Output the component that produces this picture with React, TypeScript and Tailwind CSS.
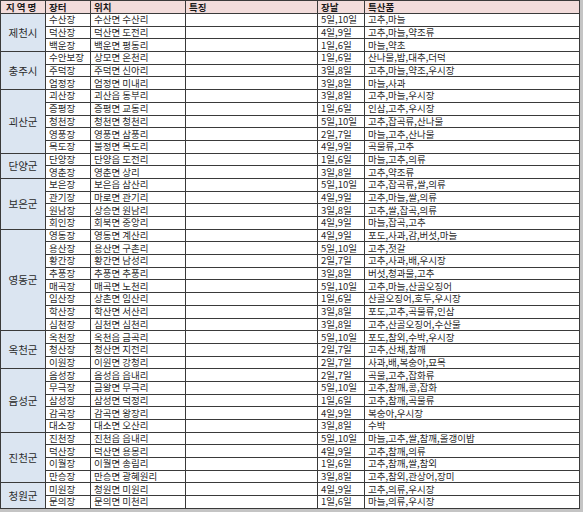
const groups: { region: string; rows: [string, string, string, string][] }[] = [
  {
    region: '제천시',
    rows: [
      ['수산장', '수산면 수산리', '5일,10일', '고추,마늘'],
      ['덕산장', '덕산면 도전리', '4일,9일', '고추,마늘,약조류'],
      ['백운장', '백운면 평동리', '1일,6일', '마늘,약초'],
    ],
  },
  {
    region: '충주시',
    rows: [
      ['수안보장', '상모면 온천리', '1일,6일', '산나물,밤,대추,더덕'],
      ['주덕장', '주덕면 신아리', '3일,8일', '고추,마늘,약조,우시장'],
      ['엄정장', '엄정면 미내리', '3일,8일', '마늘,사과'],
    ],
  },
  {
    region: '괴산군',
    rows: [
      ['괴산장', '괴산읍 동부리', '3일,8일', '고추,마늘,우시장'],
      ['증평장', '증평면 교동리', '1일,6일', '인삼,고추,우시장'],
      ['청천장', '청천면 청천리', '5일,10일', '고추,잡곡류,산나물'],
      ['영풍장', '영풍면 삼풍리', '2일,7일', '마늘,고추,산나물'],
      ['목도장', '불정면 목도리', '4일,9일', '곡물류,고추'],
    ],
  },
  {
    region: '단양군',
    rows: [
      ['단양장', '단양읍 도전리', '1일,6일', '마늘,고추,의류'],
      ['영춘장', '영춘면 상리', '3일,8일', '고추,약조류'],
    ],
  },
  {
    region: '보은군',
    rows: [
      ['보은장', '보은읍 삼산리', '5일,10일', '고추,잡곡류,쌀,의류'],
      ['관기장', '마로면 관기리', '4일,9일', '고추,마늘,쌀,의류'],
      ['원남장', '상승면 원남리', '3일,8일', '고추,쌀,잡곡,의류'],
      ['회인장', '회북면 중앙리', '4일,9일', '마늘,잡곡,고추'],
    ],
  },
  {
    region: '영동군',
    rows: [
      ['영동장', '영동면 계산리', '4일,9일', '포도,사과,감,버섯,마늘'],
      ['용산장', '용산면 구촌리', '5일,10일', '고추,젓갈'],
      ['황간장', '황간면 남성리', '2일,7일', '고추,사과,배,우시장'],
      ['추풍장', '추풍면 추풍리', '3일,8일', '버섯,청과물,고추'],
      ['매곡장', '매곡면 노천리', '5일,10일', '고추,마늘,산골오징어'],
      ['임산장', '상촌면 임산리', '1일,6일', '산골오징어,호두,우시장'],
      ['학산장', '학산면 서산리', '3일,8일', '포도,고추,곡물류,인삼'],
      ['심천장', '심천면 심천리', '3일,8일', '고추,산골오징어,수산물'],
    ],
  },
  {
    region: '옥천군',
    rows: [
      ['옥천장', '옥천읍 금곡리', '5일,10일', '포도,참외,수박,우시장'],
      ['청산장', '청산면 지전리', '2일,7일', '고추,산채,참깨'],
      ['이원장', '이원면 강청리', '2일,7일', '사과,배,복숭아,묘목'],
    ],
  },
  {
    region: '음성군',
    rows: [
      ['음성장', '음성읍 읍내리', '2일,7일', '곡물,고추,잡화류'],
      ['무극장', '금왕면 무극리', '5일,10일', '고추,참깨,콩,잡화'],
      ['삼성장', '삼성면 덕정리', '1일,6일', '고추,참깨,곡물류'],
      ['감곡장', '감곡면 왕장리', '4일,9일', '복숭아,우시장'],
      ['대소장', '대소면 오산리', '3일,8일', '수박'],
    ],
  },
  {
    region: '진천군',
    rows: [
      ['진천장', '진천읍 읍내리', '5일,10일', '마늘,고추,쌀,참깨,올갱이밥'],
      ['덕산장', '덕산면 용몽리', '4일,9일', '고추,참깨,의류'],
      ['이월장', '이월면 송림리', '1일,6일', '고추,참깨,쌀,참외'],
      ['만승장', '만승면 광혜원리', '3일,8일', '고추,참외,관상어,장미'],
    ],
  },
  {
    region: '청원군',
    rows: [
      ['미원장', '청원면 미원리', '4일,9일', '고추,의류,우시장'],
      ['문의장', '문의면 미천리', '1일,6일', '마늘,의류,우시장'],
    ],
  },
]

// each data row is 12.7px incl. its bottom border, so 39 rows + header end near y=509
const cell = 'h-full border-r border-[#3a3a3a] pl-[3px] flex items-center whitespace-nowrap'

export default function App() {
  return (
    <div
      className="w-[583px] h-[512px] bg-[#c4c4c4] overflow-hidden text-[9.5px] leading-[11px] text-[#2a2a2a]"
      style={{ fontFamily: '"Noto Sans CJK KR", "Noto Sans", sans-serif' }}
    >
      <div className="w-[580px] bg-white border-l border-t border-[#3a3a3a]">
        {/* header */}
        <div className="flex h-[13px] bg-[#f2dcdb] font-bold text-[#1a1a1a] border-b border-[#3a3a3a]">
          <div className={`${cell} w-[45px] tracking-[2px] pl-[5px]`}>지역명</div>
          <div className={`${cell} w-[45px]`}>장터</div>
          <div className={`${cell} w-[95px]`}>위치</div>
          <div className={`${cell} w-[132px]`}>특징</div>
          <div className={`${cell} w-[47px]`}>장날</div>
          <div className={`${cell} flex-1`}>특산품</div>
        </div>

        {groups.map((g) => (
          <div key={g.region} className="flex">
            <div className="w-[45px] shrink-0 bg-[#dbe5f1] border-r border-b border-[#3a3a3a] flex items-center justify-center text-[10.5px]">
              {g.region}
            </div>
            <div className="flex-1 flex flex-col">
              {g.rows.map((r, i) => (
                <div key={r[0] + i} className="flex h-[12.7px] border-b border-[#3a3a3a]">
                  <div className={`${cell} w-[45px]`}>{r[0]}</div>
                  <div className={`${cell} w-[95px]`}>{r[1]}</div>
                  <div className={`${cell} w-[132px]`}></div>
                  <div className={`${cell} w-[47px]`}>{r[2]}</div>
                  <div className={`${cell} flex-1`}>{r[3]}</div>
                </div>
              ))}
            </div>
          </div>
        ))}
      </div>
    </div>
  )
}
